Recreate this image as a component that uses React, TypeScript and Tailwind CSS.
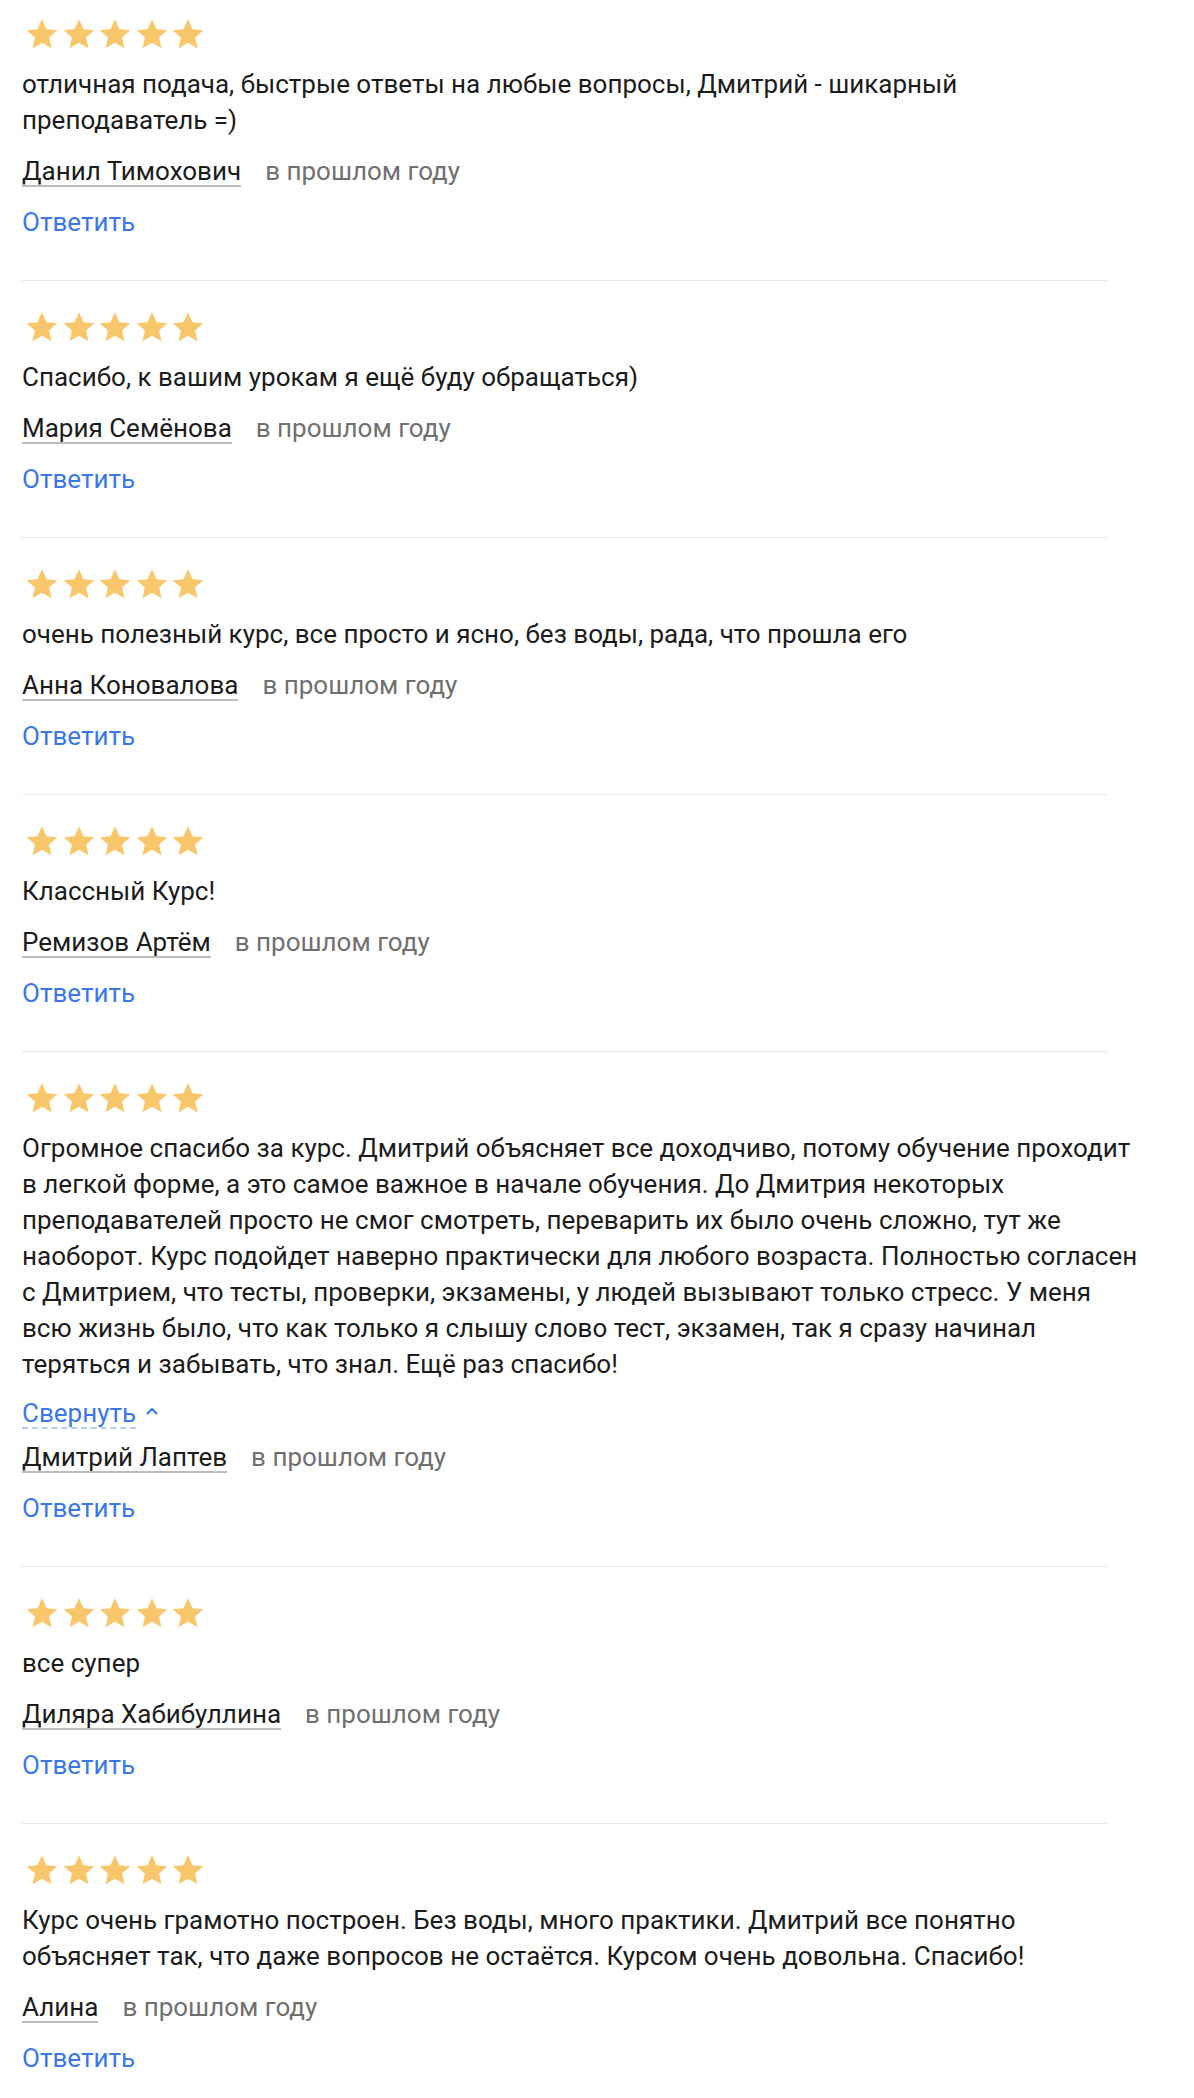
import React from "react";

type Review = {
	text: React.ReactNode;
	author: string;
	collapsible?: boolean;
};

const reviews: Review[] = [
	{
		text: (
			<>
				отличная подача, быстрые ответы на любые вопросы, Дмитрий - шикарный
				<br />
				преподаватель =)
			</>
		),
		author: "Данил Тимохович",
	},
	{ text: "Спасибо, к вашим урокам я ещё буду обращаться)", author: "Мария Семёнова" },
	{
		text: "очень полезный курс, все просто и ясно, без воды, рада, что прошла его",
		author: "Анна Коновалова",
	},
	{ text: "Классный Курс!", author: "Ремизов Артём" },
	{
		text: "Огромное спасибо за курс. Дмитрий объясняет все доходчиво, потому обучение проходит в легкой форме, а это самое важное в начале обучения. До Дмитрия некоторых преподавателей просто не смог смотреть, переварить их было очень сложно, тут же наоборот. Курс подойдет наверно практически для любого возраста. Полностью согласен с Дмитрием, что тесты, проверки, экзамены, у людей вызывают только стресс. У меня всю жизнь было, что как только я слышу слово тест, экзамен, так я сразу начинал теряться и забывать, что знал. Ещё раз спасибо!",
		author: "Дмитрий Лаптев",
		collapsible: true,
	},
	{ text: "все супер", author: "Диляра Хабибуллина" },
	{
		text: "Курс очень грамотно построен. Без воды, много практики. Дмитрий все понятно объясняет так, что даже вопросов не остаётся. Курсом очень довольна. Спасибо!",
		author: "Алина",
	},
];

function Star() {
	return (
		<svg width="34" height="34" viewBox="0 0 24 24" className="shrink-0">
			<path
				d="M12 1.6l3.2 7.1 7.6.7-5.8 5.1 1.7 7.6L12 18.1l-6.7 4 1.7-7.6-5.8-5.1 7.6-.7z"
				fill="#f8c76b"
			/>
		</svg>
	);
}

function ReviewItem({ review, first, last }: { review: Review; first: boolean; last: boolean }) {
	return (
		<div
			className={`flex flex-col w-[1085px] pb-[40px] ${
				last ? "" : "border-b border-[#e6e6f7]"
			} ${first ? "pt-[17px]" : "pt-[29px]"}`}
		>
			<div className="flex gap-[2.5px] h-[34px] ml-[3px]">
				{[0, 1, 2, 3, 4].map((i) => (
					<Star key={i} />
				))}
			</div>
			<p className="mt-[15px] w-[1124px] text-[26px] leading-[36px] text-[#1c1c1c]">
				{review.text}
			</p>
			{review.collapsible && (
				<div className="mt-[17px] flex items-center gap-[9px] h-[30px]">
					<span className="inline-block leading-[28px] text-[26px] text-[#3b78e7] border-b-2 border-dashed border-[#b9cdf3]">
						Свернуть
					</span>
					<svg width="14" height="8" viewBox="0 0 14 8" className="-mt-[6px]">
						<path d="M2 7l5-5 5 5" stroke="#3b78e7" strokeWidth="2.2" fill="none" />
					</svg>
				</div>
			)}
			<div
				className={`flex items-baseline gap-[24px] text-[26px] ${
					review.collapsible ? "mt-[14px]" : "mt-[19px]"
				}`}
			>
				<span className="inline-block leading-[28px] text-[#1c1c1c] border-b-2 border-[#bdbdbd]">
					{review.author}
				</span>
				<span className="leading-[28px] text-[#707070]">в прошлом году</span>
			</div>
			<div className="mt-[17px] text-[26px] leading-[36px] text-[#3b78e7]">Ответить</div>
		</div>
	);
}

export default function App() {
	return (
		<div
			className="min-h-[2098px] bg-white pl-[22px]"
			style={{ fontFamily: "Roboto, 'Noto Sans', sans-serif" }}
		>
			{reviews.map((r, i) => (
				<ReviewItem
					key={r.author}
					review={r}
					first={i === 0}
					last={i === reviews.length - 1}
				/>
			))}
		</div>
	);
}
